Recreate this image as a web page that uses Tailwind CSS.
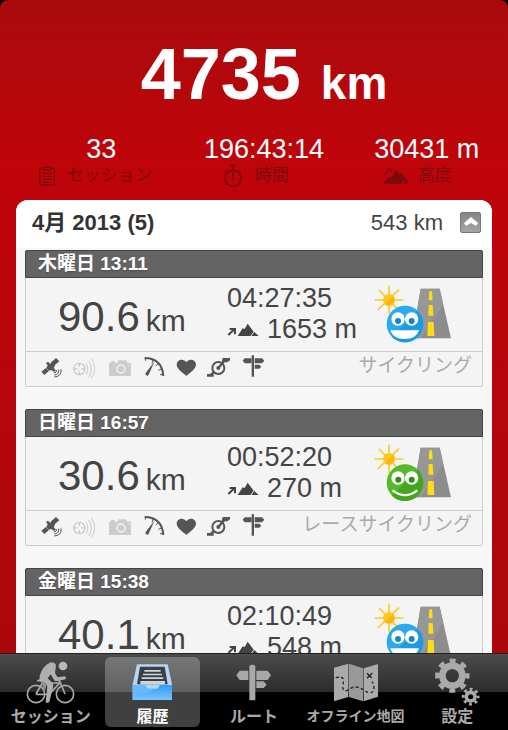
<!DOCTYPE html>
<html lang="ja">
<head>
  <meta charset="UTF-8" />
  <meta name="viewport" content="width=device-width, initial-scale=1.0"/>
  <title>履歴</title>
  <script src="https://cdn.jsdelivr.net/npm/@tailwindcss/browser@4"></script>
</head>
<body class="bg-black font-['Liberation_Sans','Noto_Sans_CJK_JP',sans-serif]">

  <!-- Shared icons -->
  <svg class="hidden">
    <symbol id="satellite" viewBox="57 42 72 72" overflow="visible">
      <g fill="currentColor">
        <path d="M64 95l14-11 9 9-14 12zM92 68l16-14 10 10-16 13z"/>
        <path d="M78 69l6-4 6 6 6-3 9 9-4 7 6 7-5 5-8-6-7 2-8-8 4-8z"/>
      </g>
      <g fill="none" stroke="currentColor" stroke-width="3">
        <path d="M109 90q2 8-7 9M116 89q2 15-13 16M123 88q3 21-20 23"/>
      </g>
    </symbol>
    <symbol id="target" viewBox="159 42 72 72" overflow="visible">
      <g fill="none" stroke="currentColor" stroke-width="4">
        <circle cx="178" cy="87" r="17"/>
        <path d="M178 70v11M178 93v11M161 87h11M184 87h11"/>
        <path d="M198 70q11 17 0 34M206 63q16 24 0 48M214 56q20 31 0 59" stroke-width="3"/>
      </g>
    </symbol>
    <symbol id="camera" viewBox="261 42 72 72" overflow="visible">
      <path fill="currentColor" d="M267 68h6v-5h11v5h8l4-7h22l4 7h11v40h-66z"/>
      <circle cx="303" cy="87" r="12" fill="none" stroke="#f4f4f4" stroke-width="4"/>
      <circle cx="327" cy="75" r="2" fill="#f4f4f4"/>
    </symbol>
    <symbol id="gauge" viewBox="363 42 72 72" overflow="visible">
      <path d="M374 54q52 1 56 54" fill="none" stroke="currentColor" stroke-width="6"/>
      <path d="M400 58l-4 12M416 70l-9 8M426 86l-11 5M430 104h-10M376 54v8" stroke="currentColor" stroke-width="3"/>
      <path d="M404 64l-18 40a5 5 0 1 1-9-5z" fill="currentColor"/>
    </symbol>
    <symbol id="heart" viewBox="465 42 72 72" overflow="visible">
      <path fill="currentColor" d="M499 108C484 95 470 87 470 73c0-14 21-20 29-6 8-14 29-8 29 6 0 14-14 22-29 35z"/>
    </symbol>
    <symbol id="crank" viewBox="567 42 72 72" overflow="visible">
      <circle cx="595" cy="84" r="18" fill="none" stroke="currentColor" stroke-width="6"/>
      <circle cx="595" cy="84" r="6" fill="currentColor"/>
      <path d="M595 84l20-24M571 106l12-11" stroke="currentColor" stroke-width="7"/>
      <path d="M608 54h22v7l-8 6h-17zM561 102h20v8h-20z" fill="currentColor"/>
    </symbol>
    <symbol id="signpost" viewBox="669 42 72 72" overflow="visible">
      <path fill="currentColor" d="M695 46h7v64h-7zM668 62l6-7h20v15h-20zM704 55h22l7 7-7 8h-22zM704 74h14l6 6-6 6h-14z"/>
    </symbol>
    <symbol id="climb" viewBox="51 132 96 42">
      <path d="M55 168l18-17" stroke="currentColor" stroke-width="6"/>
      <path d="M59 147h19v19h-6v-13H59z" fill="currentColor"/>
      <path d="M83 171l15-23 6 2 9-16 18 24-10 13zM124 171l9-12 13 12z" fill="currentColor"/>
    </symbol>
    <symbol id="road" viewBox="40 28 240 180">
      <path d="M183 42h57l34 149H158z" fill="#8d8d8d"/>
      <path d="M183 42h57l11 48-67 101h-26z" fill="#979797"/>
      <path d="M209 50h8l2 27h-12zM207 91h12l2 32h-15zM205 142h17l2 42h-21z" fill="#ffdd10"/>
    </symbol>
    <symbol id="sun" viewBox="40 28 240 180">
      <path d="M88 33v84M45 76h86M58 46l60 62M118 45l-64 61" stroke="#fbc926" stroke-width="5"/>
      <circle cx="88" cy="76" r="18" fill="#ffc918"/>
      <path d="M76 88a17 17 0 0 0 24-24z" fill="#fbb411"/>
    </symbol>
    <symbol id="grin" viewBox="40 28 240 180">
      <circle cx="136" cy="148" r="55" fill="#2aa9ee"/>
      <path d="M97 187a55 55 0 0 0 78-78z" fill="#1c9be3"/>
      <circle cx="115" cy="133" r="20" fill="#fff"/>
      <circle cx="156" cy="133" r="20" fill="#fff"/>
      <circle cx="115" cy="139" r="9" fill="#1686cc"/>
      <circle cx="156" cy="139" r="9" fill="#1686cc"/>
      <path d="M92 167h86q-8 26-43 26t-43-26z" fill="#fff"/>
    </symbol>
    <symbol id="smile" viewBox="40 28 240 180">
      <circle cx="136" cy="147" r="55" fill="#56b82b"/>
      <path d="M97 186a55 55 0 0 0 78-78z" fill="#46a51f"/>
      <circle cx="115" cy="133" r="20" fill="#fff"/>
      <circle cx="156" cy="133" r="20" fill="#fff"/>
      <circle cx="116" cy="138" r="9" fill="#358a18"/>
      <circle cx="156" cy="138" r="9" fill="#358a18"/>
      <path d="M99 170q37 29 74 0" fill="none" stroke="#fff" stroke-width="7"/>
    </symbol>
  </svg>

  <div class="h-screen flex flex-col">
    <main class="flex-1 min-h-0 overflow-hidden rounded-t-lg bg-linear-to-b from-[#a90b0c] via-[#bf040a] via-25% to-[#ab080c]">

      <!-- Totals -->
      <header class="pt-[38px] pb-3 text-white">
        <h1 class="pl-5 text-center text-[72px] leading-none font-bold">4735 <span class="text-[46px]">km</span></h1>
        <div class="mt-[25px] pl-5 grid grid-cols-3 text-center text-[27px] leading-7">
          <div>
            <p>33</p>
            <p class="mt-px pr-3 h-6 flex items-center justify-center gap-3 text-[17px] leading-6 text-[#7c0a0a]">
              <svg class="w-4 h-5" viewBox="112 498 48 60" fill="none" stroke="currentColor" stroke-width="4">
                <path d="M126 505h-11v50h43v-50h-11M126 502h21v8h-21zM123 520h28M123 529h28M123 538h28M123 547h20"/>
              </svg>
              セッション
            </p>
          </div>
          <div>
            <p>196:43:14</p>
            <p class="mt-px pr-4 h-6 flex items-center justify-center gap-3 text-[17px] leading-6 text-[#7c0a0a]">
              <svg class="w-5 h-6" viewBox="667 488 60 72" fill="none" stroke="currentColor" stroke-width="5">
                <circle cx="697" cy="531" r="24"/>
                <path d="M697 493v14M689 493h16M675 507l6 6M719 507l-6 6"/>
                <path d="M697 514v22" stroke-width="6"/>
              </svg>
              時間
            </p>
          </div>
          <div>
            <p class="whitespace-nowrap">30431 m</p>
            <p class="mt-px pr-5 h-6 flex items-center justify-center gap-2 text-[17px] leading-6 text-[#7c0a0a]">
              <svg class="w-7 h-5" viewBox="1142 496 84 60" fill="currentColor">
                <path d="M1143 549l20-21 6 3 16-23 24 30-9 11zM1205 549l6-8-17-22 7-3 23 33z"/>
                <path d="M1146 525l23-19M1157 504h13v12" fill="none" stroke="currentColor" stroke-width="4"/>
              </svg>
              高度
            </p>
          </div>
        </div>
      </header>

      <!-- Month -->
      <section class="mx-4 rounded-t-xl overflow-hidden bg-[#f7f7f7] text-[#444]">
        <div class="h-12 pb-1 pl-4 pr-[11px] flex items-center bg-white text-[22px]">
          <h2 class="flex-1 font-bold text-[#333]">4月 2013 (5)</h2>
          <span class="mr-[17px]">543 km</span>
          <button type="button" aria-label="閉じる" class="size-[21px] flex items-center justify-center rounded-xs border border-[#777] bg-linear-to-b from-[#858585] to-[#a5a5a5]">
            <svg class="w-4 h-3" viewBox="0 0 16 12"><path d="M8 1l7 6-2 3-5-3-5 3-2-3z" fill="#fff"/></svg>
          </button>
        </div>

        <div class="pt-[2px] px-[9px] space-y-[22px]">
          <!-- 木曜日 -->
          <article class="rounded-xs border border-[#ccc] bg-[#f4f4f4]">
            <h3 class="-mx-px -mt-px h-7 px-3 rounded-t-xs border border-[#444] bg-[#646464] text-[19px] leading-[26px] font-bold text-white text-shadow-sm">木曜日 13:11</h3>
            <div class="h-[73px] pl-8 pr-[29px] flex">
              <p class="w-[169px] pt-[18px] text-[42px] leading-[42px] whitespace-nowrap">90.6<span class="ml-1.5 text-[30px]">km</span></p>
              <div class="flex-1 pt-[5px] text-[27px] leading-[31px] whitespace-nowrap">
                <p>04:27:35</p>
                <p class="flex items-center gap-2"><svg class="w-8 h-[14px]"><use href="#climb"/></svg>1653 m</p>
              </div>
              <svg class="mt-[6px] w-20 h-[60px]"><use href="#road"/><use href="#sun"/><use href="#grin"/></svg>
            </div>
            <div class="h-[35px] pt-[2px] pl-[13px] pr-[10px] flex items-start gap-[10px] border-t border-[#ccc] text-[#555]">
              <svg class="size-6 shrink-0 overflow-visible"><use href="#satellite"/></svg>
              <svg class="size-6 shrink-0 overflow-visible text-[#ccc]"><use href="#target"/></svg>
              <svg class="size-6 shrink-0 overflow-visible text-[#ccc]"><use href="#camera"/></svg>
              <svg class="size-6 shrink-0 overflow-visible"><use href="#gauge"/></svg>
              <svg class="size-6 shrink-0 overflow-visible"><use href="#heart"/></svg>
              <svg class="size-6 shrink-0 overflow-visible"><use href="#crank"/></svg>
              <svg class="size-6 shrink-0 overflow-visible"><use href="#signpost"/></svg>
              <span class="ml-auto text-[19px] leading-6 whitespace-nowrap text-[#aaa]">サイクリング</span>
            </div>
          </article>

          <!-- 日曜日 -->
          <article class="rounded-xs border border-[#ccc] bg-[#f4f4f4]">
            <h3 class="-mx-px -mt-px h-7 px-3 rounded-t-xs border border-[#444] bg-[#646464] text-[19px] leading-[26px] font-bold text-white text-shadow-sm">日曜日 16:57</h3>
            <div class="h-[73px] pl-8 pr-[29px] flex">
              <p class="w-[169px] pt-[18px] text-[42px] leading-[42px] whitespace-nowrap">30.6<span class="ml-1.5 text-[30px]">km</span></p>
              <div class="flex-1 pt-[5px] text-[27px] leading-[31px] whitespace-nowrap">
                <p>00:52:20</p>
                <p class="flex items-center gap-2"><svg class="w-8 h-[14px]"><use href="#climb"/></svg>270 m</p>
              </div>
              <svg class="mt-[6px] w-20 h-[60px]"><use href="#road"/><use href="#sun"/><use href="#smile"/></svg>
            </div>
            <div class="h-[35px] pt-[2px] pl-[13px] pr-[10px] flex items-start gap-[10px] border-t border-[#ccc] text-[#555]">
              <svg class="size-6 shrink-0 overflow-visible"><use href="#satellite"/></svg>
              <svg class="size-6 shrink-0 overflow-visible text-[#ccc]"><use href="#target"/></svg>
              <svg class="size-6 shrink-0 overflow-visible text-[#ccc]"><use href="#camera"/></svg>
              <svg class="size-6 shrink-0 overflow-visible"><use href="#gauge"/></svg>
              <svg class="size-6 shrink-0 overflow-visible"><use href="#heart"/></svg>
              <svg class="size-6 shrink-0 overflow-visible"><use href="#crank"/></svg>
              <svg class="size-6 shrink-0 overflow-visible"><use href="#signpost"/></svg>
              <span class="ml-auto text-[19px] leading-6 whitespace-nowrap text-[#aaa]">レースサイクリング</span>
            </div>
          </article>

          <!-- 金曜日 -->
          <article class="rounded-xs border border-[#ccc] bg-[#f4f4f4]">
            <h3 class="-mx-px -mt-px h-7 px-3 rounded-t-xs border border-[#444] bg-[#646464] text-[19px] leading-[26px] font-bold text-white text-shadow-sm">金曜日 15:38</h3>
            <div class="h-[73px] pl-8 pr-[29px] flex">
              <p class="w-[169px] pt-[18px] text-[42px] leading-[42px] whitespace-nowrap">40.1<span class="ml-1.5 text-[30px]">km</span></p>
              <div class="flex-1 pt-[5px] text-[27px] leading-[31px] whitespace-nowrap">
                <p>02:10:49</p>
                <p class="flex items-center gap-2"><svg class="w-8 h-[14px]"><use href="#climb"/></svg>548 m</p>
              </div>
              <svg class="mt-[6px] w-20 h-[60px]"><use href="#road"/><use href="#sun"/><use href="#grin"/></svg>
            </div>
          </article>
        </div>
      </section>
    </main>

    <!-- Tab bar -->
    <nav class="shrink-0 flex py-[3px] border-t border-[#222] bg-linear-to-b from-[#4c4c4c] from-0% via-[#2c2c2c] via-50% to-black to-50% font-bold text-[#aaa]">
      <button type="button" class="flex-1 min-w-0 mx-[3px] pt-px flex flex-col items-center rounded-md">
        <span class="h-12 flex items-center">
          <svg class="w-[49px] h-[43px]" viewBox="78 48 147 129">
            <g fill="none" stroke="#a8a8a8" stroke-width="5">
              <circle cx="108" cy="147" r="26"/>
              <circle cx="195" cy="147" r="26"/>
              <path d="M108 147l19-33h52l-32 34h-39M179 114l-2-14h14M179 108l16 39M125 107h-14"/>
            </g>
            <circle cx="189" cy="63" r="13" fill="#b8b8b8"/>
            <path d="M119 92q10-30 30-39 14-4 19 8l-3 23 8 13 21-3q7 4 2 9l-26 6q-7 0-10-8l-8-13-9 12 14 13q5 6 2 14l-11 43q-5 6-11 2l5-50-19-11q-8-4-4-11z" fill="#b0b0b0"/>
            <path d="M126 107l15 9-6 20-7-4z" fill="#909090"/>
          </svg>
        </span>
        <span class="text-base leading-[21px] whitespace-nowrap">セッション</span>
      </button>
      <button type="button" aria-current="page" class="flex-1 min-w-0 mx-[3px] pt-px flex flex-col items-center rounded-md bg-white/25 text-white">
        <span class="h-12 flex items-center">
          <svg class="w-[41px] h-[38px]" viewBox="397 54 123 114">
            <defs>
              <linearGradient id="tray" x1="0" y1="0" x2="0" y2="1">
                <stop offset="0" stop-color="#2e9cf5"/><stop offset="1" stop-color="#7cc4fb"/>
              </linearGradient>
            </defs>
            <path d="M412 58h92l13 60v47H399v-47z" fill="#b5d6f2"/>
            <path d="M421 65h74l9 53h-92z" fill="#3a3f45"/>
            <path d="M434 75h49v5h-49zM430 86h57v5h-57zM426 97h65v5h-65zM422 108h74v10h-74z" fill="#ccd5dd"/>
            <path d="M399 120h37l8 11h30l7-11h36v45H399z" fill="url(#tray)"/>
            <path d="M399 120h37l8 11h20q-20 16-65 17z" fill="#69b9fa"/>
          </svg>
        </span>
        <span class="text-base leading-[21px] whitespace-nowrap">履歴</span>
      </button>
      <button type="button" class="flex-1 min-w-0 mx-[3px] pt-px flex flex-col items-center rounded-md">
        <span class="h-12 flex items-center">
          <svg class="w-9 h-[37px]" viewBox="110 56 108 111" fill="#a8a8a8">
            <path d="M150 62q9-8 18 0v103h-18z"/>
            <path d="M111 90l10-14h26v28h-26zM171 76h34l10 14-10 14h-34zM171 108h22l9 10-9 10h-22z"/>
          </svg>
        </span>
        <span class="text-base leading-[21px] whitespace-nowrap">ルート</span>
      </button>
      <button type="button" class="flex-1 min-w-0 mx-[3px] pt-px flex flex-col items-center rounded-md">
        <span class="h-12 flex items-center">
          <svg class="w-[46px] h-[39px]" viewBox="396 56 138 117">
            <path d="M399 70l43-12v100l-43 13zM488 72l43-13v98l-43 14z" fill="#aaa"/>
            <path d="M444 58l42 14v99l-42-13z" fill="#999"/>
            <path d="M404 100q22-6 24 8l-3 18q0 16 14 12l14-8q14-5 27 2l20 12q18 4 19-12 0-12-6-20" fill="none" stroke="#222" stroke-width="4" stroke-dasharray="9 7"/>
            <path d="M498 87l14 14M514 86l-16 16" stroke="#222" stroke-width="4"/>
          </svg>
        </span>
        <span class="text-sm leading-[21px] whitespace-nowrap">オフライン地図</span>
      </button>
      <button type="button" class="flex-1 min-w-0 mx-[3px] pt-px flex flex-col items-center rounded-md">
        <span class="h-12 flex items-center">
          <svg class="w-[46px] h-12" viewBox="702 40 138 144" fill="none" stroke="#aaa">
            <circle cx="757" cy="93" r="30" stroke-width="20"/>
            <circle cx="757" cy="93" r="45" stroke-width="13" stroke-dasharray="17.7 17.6" stroke-dashoffset="9"/>
            <circle cx="812" cy="156" r="13" stroke-width="11"/>
            <circle cx="812" cy="156" r="22" stroke-width="9" stroke-dasharray="8.6 8.7" stroke-dashoffset="4"/>
          </svg>
        </span>
        <span class="text-base leading-[21px] whitespace-nowrap">設定</span>
      </button>
    </nav>
  </div>
</body>
</html>
